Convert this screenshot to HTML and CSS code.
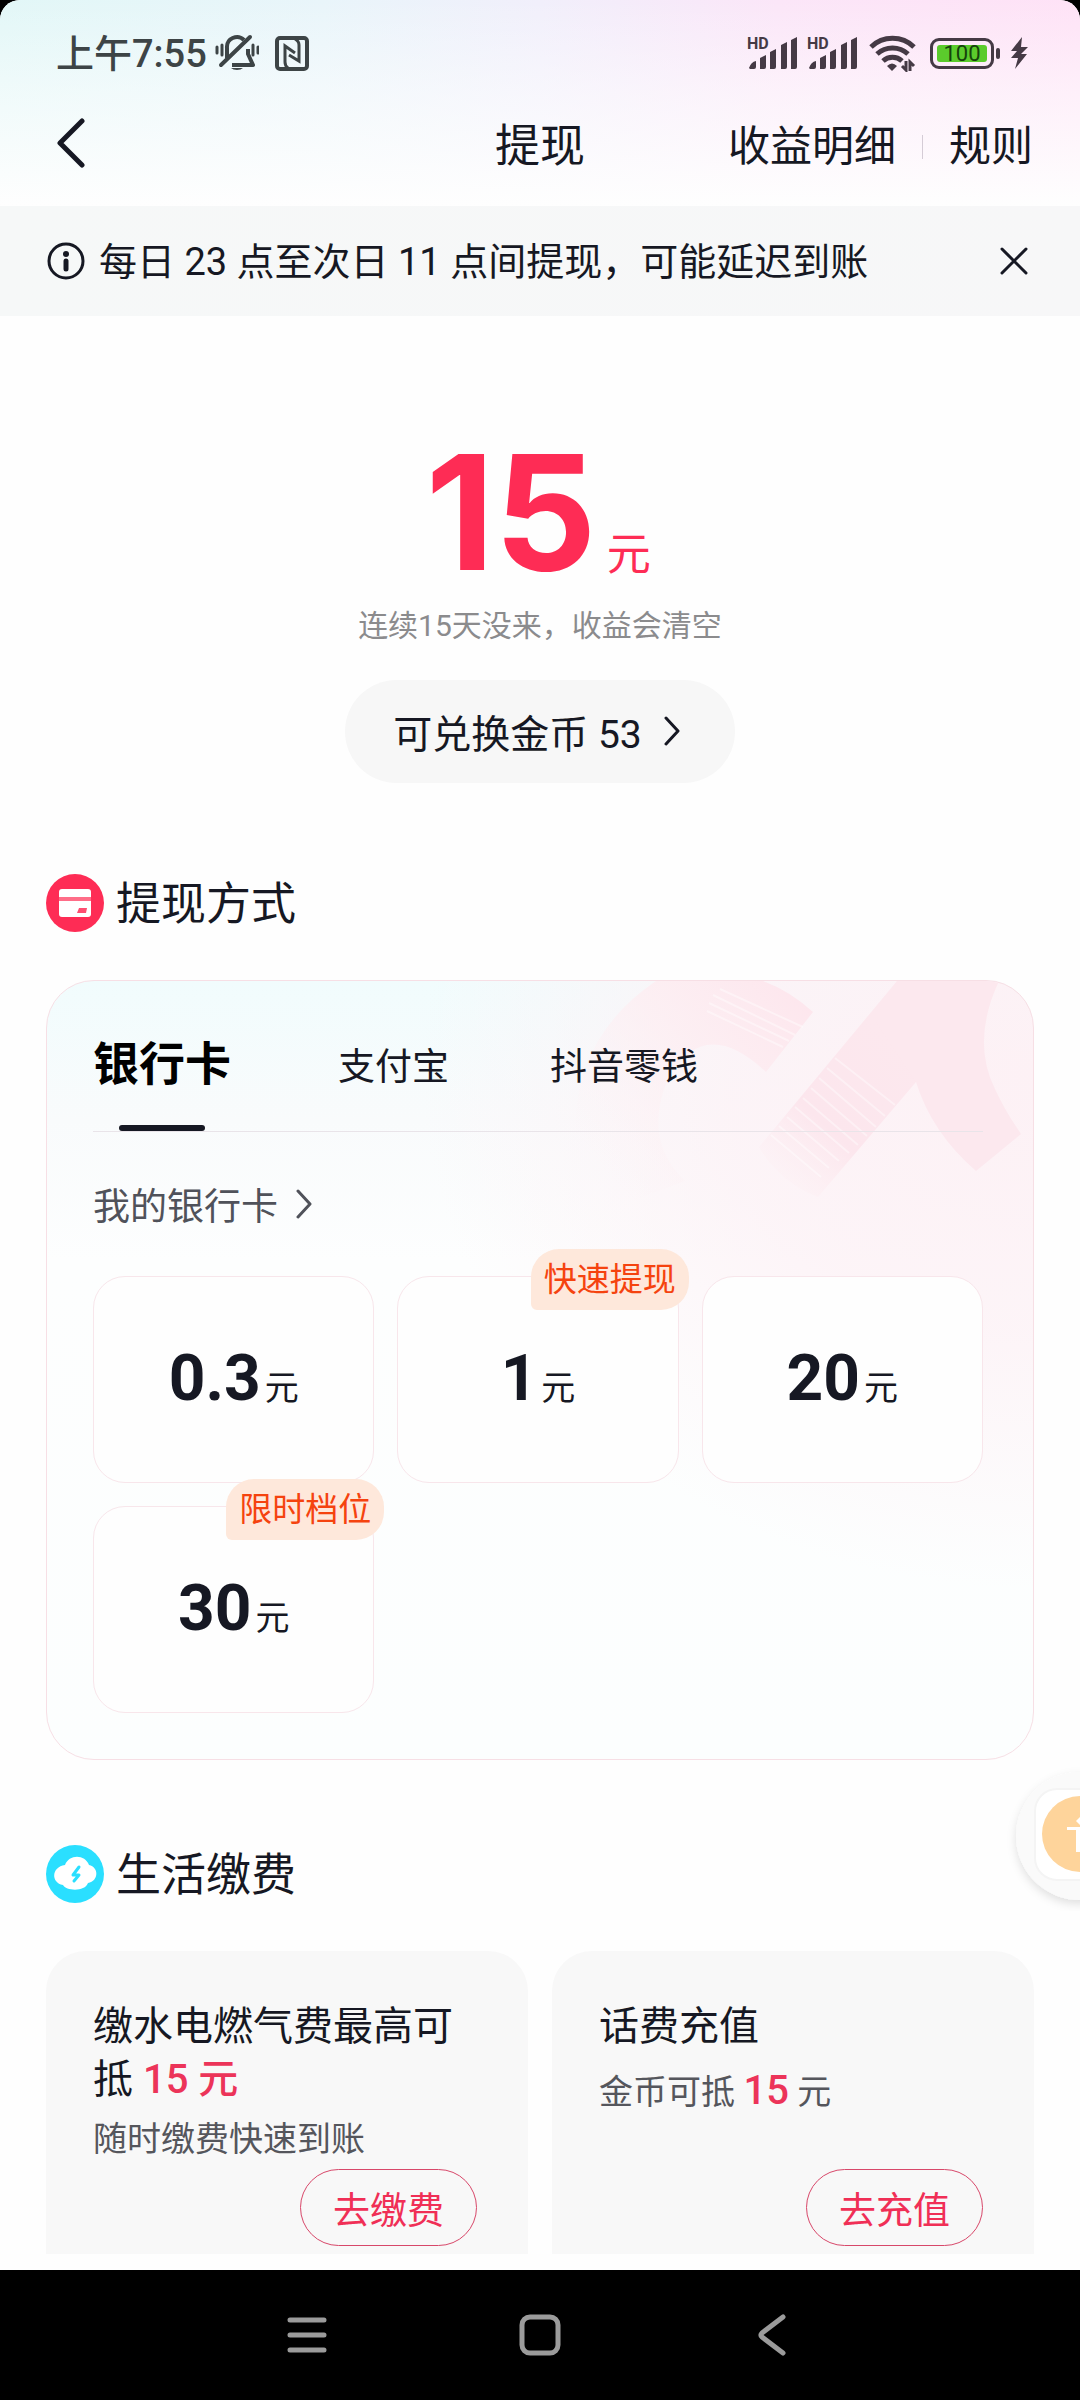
FILE: index.html
```html
<!DOCTYPE html>
<html lang="zh-CN">
<head>
<meta charset="utf-8">
<meta name="viewport" content="width=device-width, initial-scale=1">
<title>提现</title>
<link rel="stylesheet" href="styles.css">
</head>
<body>
<div class="device">
<div class="page">
  <header class="header">
    <div class="status">
      <span class="status-time">上午7:55</span>
      <svg class="icon-bell" width="44" height="40" viewBox="0 0 44 40" fill="none" stroke="#3d4446" stroke-width="4">
        <path d="M12 25V15a10 10 0 0 1 17-8M33 16v5l5 11H17" stroke-linejoin="round"/>
        <path d="M6 32 35 4" stroke-linecap="round"/>
        <path d="M2 14v6M7 12v10M43 14v6M38 12v10" stroke-width="3" stroke-linecap="round"/>
        <path d="M16 35h12a7 4 0 0 1-12 0z" fill="#3d4446" stroke="none"/>
      </svg>
      <svg class="icon-nfc" width="34" height="36" viewBox="0 0 34 36" fill="none" stroke="#3d4446" stroke-width="4">
        <rect x="2" y="3" width="30" height="31" rx="3"/>
        <path d="M13 33q-3-2-3-6V11l10 7M20 4q4 2 4 6v16l-10-6" stroke-width="3"/>
      </svg>
      <span class="status-right">
        <svg class="signal" width="50" height="36" viewBox="0 0 50 36" fill="#453a45">
          <text x="0" y="14" class="hd">HD</text>
          <path d="M2 33q2-6 7-7v6q0 2-2 2H3zM13 34V23l6-3v12q0 2-2 2zM23 34V17l6-3v18q0 2-2 2zM34 34V10l6-3v25q0 2-2 2zM44 34V5l6-3v30q0 2-2 2z"/>
        </svg>
        <svg class="signal" width="50" height="36" viewBox="0 0 50 36" fill="#453a45">
          <text x="0" y="14" class="hd">HD</text>
          <path d="M2 33q2-6 7-7v6q0 2-2 2H3zM13 34V23l6-3v12q0 2-2 2zM23 34V17l6-3v18q0 2-2 2zM34 34V10l6-3v25q0 2-2 2zM44 34V5l6-3v30q0 2-2 2z"/>
        </svg>
        <svg class="icon-wifi" width="47" height="38" viewBox="0 0 47 38" fill="none" stroke="#453a45" stroke-width="5">
          <path d="M2 13a31 31 0 0 1 43 0M8 20a23 23 0 0 1 31 0M14 27a14 14 0 0 1 19 0"/>
          <path d="M18 32q5-5 10 0l-5 5z" fill="#453a45" stroke="none"/>
          <path d="M37 27v9l-4-4M41 37v-9l4 4" stroke-width="3"/>
        </svg>
        <span class="battery"><span class="battery-level">100</span></span>
        <svg width="18" height="32" viewBox="0 0 18 32" fill="#453a45"><path d="M12 0 1 14h6l-6 7h7L5 32l12-15h-6l7-7h-7z"/></svg>
      </span>
    </div>
    <nav class="nav">
      <button class="plain back" aria-label="返回">
        <svg width="28" height="50" viewBox="0 0 28 50" fill="none" stroke="#161823" stroke-width="5" stroke-linecap="round" stroke-linejoin="round"><path d="M25 3 3 25l22 22"/></svg>
      </button>
      <h1 class="title">提现</h1>
      <div class="links">
        <a href="#detail">收益明细</a>
        <span class="sep"></span>
        <a href="#rules">规则</a>
      </div>
    </nav>
  </header>

  <div class="notice">
    <svg width="38" height="38" viewBox="0 0 38 38" fill="none" stroke="#161823" stroke-width="3"><circle cx="19" cy="19" r="17"/><circle cx="19" cy="12" r="3" fill="#161823" stroke="none"/><path d="M19 19v8" stroke-width="5" stroke-linecap="round"/></svg>
    <p class="notice-text">每日 23 点至次日 11 点间提现，可能延迟到账</p>
    <button class="plain close" aria-label="关闭">
      <svg width="28" height="28" viewBox="0 0 28 28" stroke="#161823" stroke-width="3" stroke-linecap="round"><path d="m2 2 24 24M26 2 2 26"/></svg>
    </button>
  </div>

  <main class="main">
    <section class="balance">
      <p class="amount"><strong>15</strong><span>元</span></p>
      <p class="hint">连续15天没来，收益会清空</p>
      <button class="pill">可兑换金币 53
        <svg width="16" height="30" viewBox="0 0 16 30" fill="none" stroke="#161823" stroke-width="3" stroke-linecap="round" stroke-linejoin="round"><path d="m2 2 12 13L2 28"/></svg>
      </button>
    </section>

    <h2 class="section-title">
      <svg width="58" height="58" viewBox="0 0 58 58"><circle cx="29" cy="29" r="29" fill="#fe2c55"/><rect x="13" y="15" width="32" height="28" rx="3" fill="#fff"/><path d="M13 23h32v4H13z" fill="#ff6d88"/><path d="M33 34h8l-1 5h-9z" fill="#fe4d70"/></svg>
      <span>提现方式</span>
    </h2>
    <section class="card">
      <svg class="watermark" width="458" height="240" viewBox="530 0 458 240" aria-hidden="true">
        <defs>
          <linearGradient id="c" x1="768" y1="20" x2="560" y2="190" gradientUnits="userSpaceOnUse"><stop offset="0" stop-color="#fde6ed"/><stop offset=".5" stop-color="#fdeef2" stop-opacity=".8"/><stop offset="1" stop-color="#fdf2f5" stop-opacity="0"/></linearGradient>
          <linearGradient id="x" x1="860" y1="70" x2="740" y2="205" gradientUnits="userSpaceOnUse"><stop offset="0" stop-color="#fce8ee"/><stop offset=".6" stop-color="#fce6ed"/><stop offset="1" stop-color="#fdeef2" stop-opacity=".2"/></linearGradient>
        </defs>
        <path d="M611 0Q530 55 530 150q0 50 30 80l80-30q-42-40-18-100 36-68 99-9l47-60Q745 10 718 0z" fill="url(#c)"/>
        <path d="M852 0 714 166q20 35 59 50l98-115z" fill="url(#x)"/>
        <path d="M852 0h102q-28 60-4 108 10 22 26 45l-45 37q-44-38-60-89l-40-60z" fill="#fce8ee"/>
        <path d="m675 8 83 38M668 14l82 40M664 22l80 38M662 30l76 36M790 77l60 47M782 87l58 48M774 97l57 49M766 107l56 48M758 117l55 47M750 126l54 46M742 136l52 44M734 145l50 42M726 154l50 42" stroke="#fff" stroke-opacity=".4" stroke-width="2"/>
      </svg>
      <div class="tabs" role="tablist">
        <button class="tab tab-active" role="tab" aria-selected="true">银行卡</button>
        <button class="tab" role="tab" aria-selected="false">支付宝</button>
        <button class="tab" role="tab" aria-selected="false">抖音零钱</button>
      </div>
      <a class="my-card" href="#cards">我的银行卡
        <svg width="16" height="30" viewBox="0 0 16 30" fill="none" stroke="#50525a" stroke-width="3" stroke-linecap="round" stroke-linejoin="round"><path d="m2 2 12 13L2 28"/></svg>
      </a>
      <div class="tiles">
        <button class="tile"><strong>0.3</strong><span>元</span></button>
        <button class="tile"><strong>1</strong><span>元</span><em class="badge">快速提现</em></button>
        <button class="tile"><strong>20</strong><span>元</span></button>
        <button class="tile"><strong>30</strong><span>元</span><em class="badge">限时档位</em></button>
      </div>
    </section>

    <h2 class="section-title section-title-life">
      <svg width="58" height="58" viewBox="0 0 58 58"><circle cx="29" cy="29" r="29" fill="#2adfff"/><path d="M19 20c4-11 20-11 24 0 10 2 10 16-1 18-3 9-22 8-25 2-12-2-12-18 2-20z" fill="#fff"/><path d="m33 22-6 8h6l-5 6" fill="none" stroke="#2adfff" stroke-width="3" stroke-linecap="round" stroke-linejoin="round"/></svg>
      <span>生活缴费</span>
    </h2>
    <section class="services">
      <article class="service">
        <h3>缴水电燃气费最高可抵 <b>15 元</b></h3>
        <p>随时缴费快速到账</p>
        <button class="action">去缴费</button>
      </article>
      <article class="service">
        <h3>话费充值</h3>
        <p>金币可抵 <b>15</b> 元</p>
        <button class="action">去充值</button>
      </article>
    </section>
  </main>

  <button class="float" aria-label="无障碍">
    <svg width="80" height="150" viewBox="0 0 80 150">
      <defs><filter id="s" x="-30%" y="-30%" width="160%" height="160%"><feDropShadow dx="0" dy="4" stdDeviation="5" flood-opacity=".12"/></filter></defs>
      <circle cx="80" cy="75" r="64" fill="#fafafa" filter="url(#s)"/>
      <rect x="35" y="28" width="92" height="91" rx="22" fill="#fff" stroke="#f4f4f4" stroke-width="2"/>
      <circle cx="80" cy="73" r="38" fill="#fed49b"/>
      <path d="M67 66h28v3h-9v22h-4V80h-2v11h-4V69h-9z" fill="#fff"/><path d="m81 55 6 5-6 5-5-5z" fill="#fff"/>
    </svg>
  </button>
</div>
<footer class="system-nav">
  <button class="plain" aria-label="菜单"><svg width="40" height="40" viewBox="0 0 40 40" stroke="#9b9b9b" stroke-width="5" stroke-linecap="round"><path d="M3 5h34M3 20h34M3 35h34"/></svg></button>
  <button class="plain" aria-label="主页"><svg width="42" height="42" viewBox="0 0 42 42" fill="none" stroke="#9b9b9b" stroke-width="5"><rect x="3" y="3" width="36" height="36" rx="8"/></svg></button>
  <button class="plain" aria-label="后退"><svg width="40" height="42" viewBox="0 0 40 42" fill="none" stroke="#9b9b9b" stroke-width="5" stroke-linecap="round" stroke-linejoin="round"><path d="M30 3 9 19q-2 2 0 4l21 16"/></svg></button>
</footer>
</div>
</body>
</html>
```
FILE: styles.css
```css
* { box-sizing: border-box; }

body {
  margin: 0;
  background: #000;
  color: #161823;
  font-family: Roboto, "Noto Sans CJK SC", sans-serif;
}

h1, h2, h3, p { margin: 0; font-weight: 400; }
a { color: inherit; text-decoration: none; }
svg { display: block; flex: none; }
button { font: inherit; color: inherit; cursor: pointer; }

.plain { padding: 0; border: 0; background: none; }

.device {
  display: flex;
  flex-direction: column;
  min-height: 100vh;
}

.page {
  position: relative;
  flex: 1;
  overflow: hidden;
  background: #fefefe;
  border-radius: 20px 20px 0 0;
}

/* Header */
.header {
  padding-bottom: 4px;
  background:
    linear-gradient(to bottom, rgba(254, 254, 254, 0) 0, rgba(254, 254, 254, .5) 45%, #fefefe 100%),
    linear-gradient(to right, #e2f7f7 0, #e9f5fa 30%, #f1effb 50%, #fbe6f8 72%, #fee2f6 100%);
}

.status {
  display: flex;
  align-items: center;
  height: 88px;
  padding: 18px 52px 0 56px;
  color: #3d4446;
}

.status-time { padding-top: 2px; font-size: 38px; font-weight: 500; line-height: 44px; }
.icon-bell { margin-left: 8px; }
.icon-nfc { margin-left: 16px; }

.status-right {
  display: flex;
  align-items: center;
  gap: 10px;
  margin-left: auto;
}

.signal { overflow: visible; }
.hd { font: 700 16px Roboto, sans-serif; }
.icon-wifi { margin-left: 2px; }

.battery {
  position: relative;
  display: flex;
  width: 64px;
  height: 31px;
  margin: 0 6px 0 4px;
  padding: 4px;
  border: 3px solid #453a45;
  border-radius: 9px;
}

.battery::after {
  content: "";
  position: absolute;
  right: -9px;
  top: 7px;
  width: 4px;
  height: 11px;
  border-radius: 2px;
  background: #453a45;
}

.battery-level {
  flex: 1;
  border-radius: 3px;
  background: #5bcb2c;
  color: #15430b;
  font-size: 22px;
  line-height: 18px;
  text-align: center;
}

.nav {
  display: grid;
  grid-template-columns: 1fr auto 1fr;
  align-items: center;
  height: 114px;
  padding: 0 47px;
}

.back { justify-self: start; margin: 0 0 4px 10px; }
.title { padding-top: 4px; font-size: 45px; line-height: 60px; }

.links {
  display: flex;
  align-items: center;
  justify-self: end;
  gap: 26px;
  padding-top: 4px;
  font-size: 42px;
  line-height: 60px;
}

.sep { width: 1px; height: 24px; background: #d5ccd6; }

/* Notice */
.notice {
  display: flex;
  align-items: center;
  height: 110px;
  padding: 0 52px 0 47px;
  background: linear-gradient(to right, #f6f8f8, #f7f7f8);
}

.notice-text { margin-left: 14px; padding-top: 2px; font-size: 38px; line-height: 54px; }
.close { margin-left: auto; }

/* Balance */
.main { padding: 0 46px 15px; }

.balance {
  display: flex;
  flex-direction: column;
  align-items: center;
  padding-top: 116px;
}

.amount {
  display: flex;
  align-items: baseline;
  gap: 10px;
  height: 160px;
  padding-right: 4px;
  color: #fe2c55;
  font-size: 44px;
  line-height: 60px;
}

.amount strong { font-family: Inter, sans-serif; font-size: 160px; line-height: 160px; }

.hint { margin-top: 12px; color: #8b8b8d; font-size: 30px; line-height: 44px; }

.pill {
  display: flex;
  align-items: center;
  gap: 22px;
  height: 103px;
  margin-top: 32px;
  padding: 0 55px 2px 48px;
  border: 0;
  border-radius: 52px;
  background: #f7f7f7;
  font-size: 39px;
}

.section-title {
  display: flex;
  align-items: center;
  gap: 12px;
  margin: 91px 0 48px;
  font-size: 45px;
  line-height: 54px;
}

.section-title span { padding-top: 4px; }
.section-title-life { margin-top: 85px; }

/* Withdrawal card */
.card {
  position: relative;
  padding: 0 50px 46px 46px;
  border: 1px solid #f7dfe5;
  border-radius: 48px;
  background:
    radial-gradient(ellipse 62% 66% at 100% 12%, #fdf1f5 0, rgba(253, 242, 246, .8) 50%, rgba(254, 250, 252, 0) 100%),
    linear-gradient(to bottom, #f1fcfd 0, #f9fbfc 18%, #fdfefe 36%, #fcfefe 100%);
}

.watermark {
  position: absolute;
  top: 0;
  right: 0;
  border-top-right-radius: 48px;
}

.tabs {
  position: relative;
  display: flex;
  align-items: center;
  gap: 101px;
  height: 151px;
  border-bottom: 1px solid #e9e4e9;
}

.tab {
  position: relative;
  height: 100%;
  padding: 16px 0 0;
  border: 0;
  background: none;
  font-size: 37px;
}

.tab-active {
  margin-right: 6px;
  padding-top: 8px;
  color: #000;
  font-size: 46px;
  font-weight: 700;
}

.tab-active::after {
  content: "";
  position: absolute;
  bottom: 0;
  left: 50%;
  width: 86px;
  height: 6px;
  margin-left: -43px;
  border-radius: 3px;
  background: #161823;
}

.my-card {
  display: flex;
  align-items: center;
  gap: 18px;
  height: 144px;
  color: #50525a;
  font-size: 37px;
}

.tiles {
  position: relative;
  display: grid;
  grid-template-columns: repeat(3, 1fr);
  gap: 23px;
}

.tile {
  position: relative;
  display: flex;
  align-items: baseline;
  justify-content: center;
  gap: 4px;
  height: 207px;
  padding: 62px 0 0;
  border: 1px solid #f8e6eb;
  border-radius: 32px;
  background: #fefefe;
  font-size: 34px;
}

.tile strong { font-size: 64px; line-height: 80px; }

.badge {
  position: absolute;
  top: -28px;
  right: -11px;
  padding: 1px 13px 0;
  border-radius: 28px 28px 28px 6px;
  background: #fee8db;
  color: #f5430f;
  font-size: 33px;
  font-style: normal;
  line-height: 60px;
}

/* Life services */
.services {
  display: grid;
  grid-template-columns: 1fr 1fr;
  gap: 24px;
}

.service {
  display: flex;
  flex-direction: column;
  padding: 49px 51px 8px 47px;
  border-radius: 40px 40px 0 0;
  background: #f8f8f8;
}

.service h3 { font-size: 40px; line-height: 53px; }

.service p {
  margin: 11px 0 8px;
  color: #55565c;
  font-size: 34px;
  line-height: 44px;
}

.service b { color: #ec3459; font-weight: 500; }
.service p b { font-size: 40px; line-height: 54px; }

.action {
  align-self: flex-end;
  height: 77px;
  margin-top: auto;
  padding: 0 32px;
  border: 1px solid #d8486a;
  border-radius: 39px;
  background: none;
  color: #f02f56;
  font-size: 37px;
}

/* Floating assistant, half off the right edge */
.float {
  position: absolute;
  top: 1761px;
  right: 0;
  padding: 0;
  border: 0;
  background: none;
}

/* System navigation */
.system-nav {
  display: flex;
  align-items: center;
  justify-content: center;
  gap: 192px;
  height: 130px;
  background: #000;
}
```
